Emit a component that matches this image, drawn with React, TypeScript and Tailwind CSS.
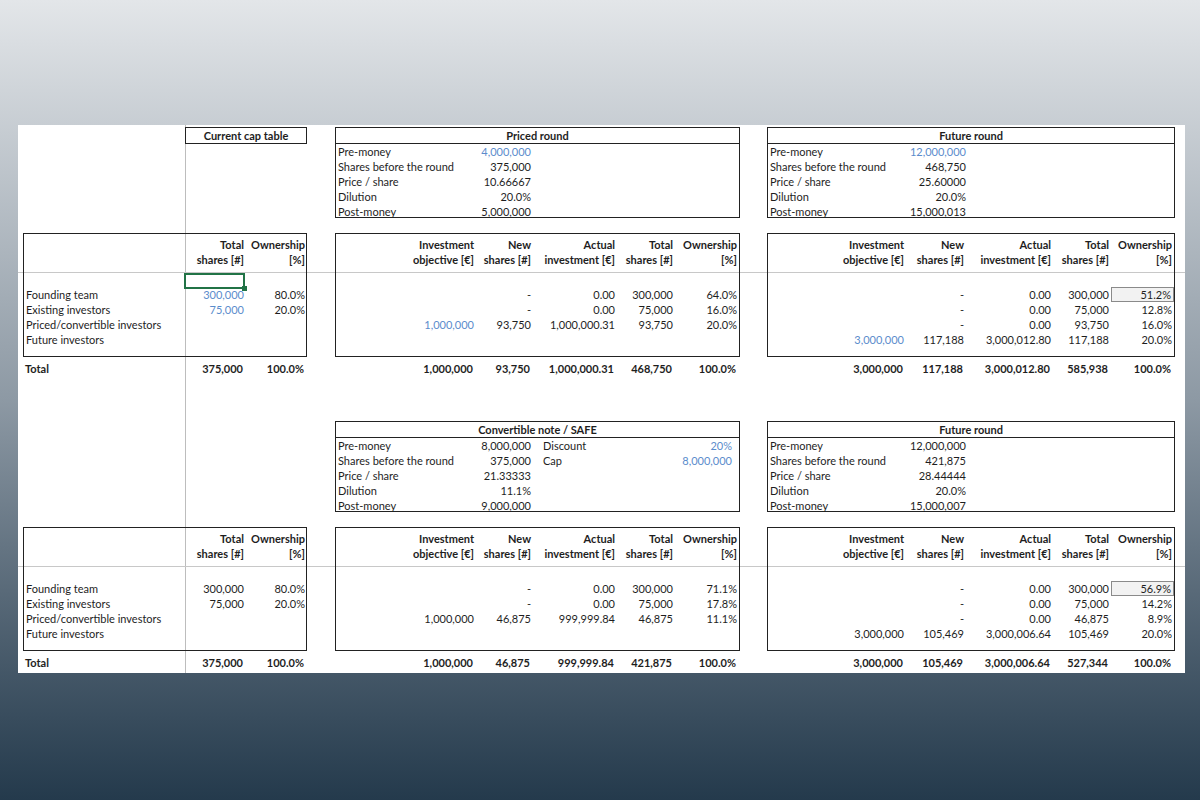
const FONT = { fontFamily: 'Lato, "Noto Sans", sans-serif' };

type Cell = { t?: string; blue?: boolean; hl?: boolean };

const MID_W = [140, 57, 84, 58, 64];
const RIGHT_W = [138, 60, 87, 58, 63];
const HEAD1 = ['Investment', 'New', 'Actual', 'Total', 'Ownership'];
const HEAD2 = ['objective [€]', 'shares [#]', 'investment [€]', 'shares [#]', '[%]'];
const LABELS = ['Founding team', 'Existing investors', 'Priced/convertible investors', 'Future investors'];

function NumRow({ widths, cells, bold }: { widths: number[]; cells: Cell[]; bold?: boolean }) {
  return (
    <div className={`flex h-[15px] leading-[15px] ${bold ? 'font-bold' : ''}`}>
      {widths.map((w, i) => {
        const c = cells[i] || {};
        return (
          <div
            key={i}
            style={{ width: w }}
            className={`text-right pr-[2px] shrink-0 ${c.blue ? 'text-[#5b8ccc]' : ''} ${c.hl ? 'bg-[#f2f2f2] border border-[#8a8a8a] leading-[13px]' : ''}`}
          >
            {c.t}
          </div>
        );
      })}
    </div>
  );
}

function TopBox({ title, rows, w, valW, extra }: { title: string; rows: [string, string, boolean?][]; w: number; valW: number; extra?: [string, string][] }) {
  return (
    <div style={{ width: w }} className="border border-[#222] h-[91px] shrink-0">
      <div className="h-[16px] leading-[15px] text-center font-bold border-b border-[#222]">{title}</div>
      {rows.map(([l, v, b], i) => (
        <div key={i} className="flex h-[15px] leading-[15px]">
          <div className="w-[140px] pl-[2px] shrink-0">{l}</div>
          <div style={{ width: valW }} className={`text-right shrink-0 ${b ? 'text-[#5b8ccc]' : ''}`}>{v}</div>
          {extra && extra[i] && (
            <>
              <div className="w-[84px] pl-[12px] shrink-0">{extra[i][0]}</div>
              <div className="w-[119px] text-right pr-[2px] shrink-0 text-[#5b8ccc]">{extra[i][1]}</div>
            </>
          )}
        </div>
      ))}
    </div>
  );
}

function TableBox({ widths, data, total, width }: { widths: number[]; data: Cell[][]; total: Cell[]; width: number }) {
  return (
    <div style={{ width }} className="shrink-0">
      <div className="border border-[#222] h-[124px] pt-[3px]">
        <NumRow widths={widths} cells={HEAD1.map((t) => ({ t }))} bold />
        <NumRow widths={widths} cells={HEAD2.map((t) => ({ t }))} bold />
        <div className="h-[20px]" />
        {data.map((r, i) => (
          <NumRow key={i} widths={widths} cells={r} />
        ))}
      </div>
      <div className="mt-[4px]">
        <NumRow widths={widths} cells={total} bold />
      </div>
    </div>
  );
}

function LeftBox({ data, total, selected }: { data: Cell[][]; total: Cell[]; selected?: boolean }) {
  return (
    <div className="w-[284px] shrink-0">
      <div className="border border-[#222] h-[124px] pt-[3px] flex">
        <div className="w-[161px] shrink-0">
          <div className="h-[50px]" />
          {LABELS.map((l) => (
            <div key={l} className="h-[15px] leading-[15px] pl-[2px]">{l}</div>
          ))}
        </div>
        <div className="relative">
          <NumRow widths={[61, 61]} cells={[{ t: 'Total' }, { t: 'Ownership' }]} bold />
          <NumRow widths={[61, 61]} cells={[{ t: 'shares [#]' }, { t: '[%]' }]} bold />
          <div className="h-[20px]" />
          {data.map((r, i) => (
            <NumRow key={i} widths={[61, 61]} cells={r} />
          ))}
          {selected && (
            <div className="absolute left-[-1px] top-[36px] w-[61px] h-[16px] border-2 border-[#217346]">
              <div className="absolute right-[-4px] bottom-[-4px] w-[5px] h-[5px] bg-[#217346]" />
            </div>
          )}
        </div>
      </div>
      <div className="mt-[4px] flex font-bold h-[15px] leading-[15px]">
        <div className="w-[161px] pl-[2px]">Total</div>
        <NumRow widths={[61, 61]} cells={total} bold />
      </div>
    </div>
  );
}

function Section({ first }: { first?: boolean }) {
  const mid = first
    ? {
        title: 'Priced round',
        rows: [['Pre-money', '4,000,000', true], ['Shares before the round', '375,000'], ['Price / share', '10.66667'], ['Dilution', '20.0%'], ['Post-money', '5,000,000']] as [string, string, boolean?][],
        data: [
          [{}, { t: '-' }, { t: '0.00' }, { t: '300,000' }, { t: '64.0%' }],
          [{}, { t: '-' }, { t: '0.00' }, { t: '75,000' }, { t: '16.0%' }],
          [{ t: '1,000,000', blue: true }, { t: '93,750' }, { t: '1,000,000.31' }, { t: '93,750' }, { t: '20.0%' }],
          [],
        ] as Cell[][],
        total: ['1,000,000', '93,750', '1,000,000.31', '468,750', '100.0%'].map((t) => ({ t })),
      }
    : {
        title: 'Convertible note / SAFE',
        rows: [['Pre-money', '8,000,000'], ['Shares before the round', '375,000'], ['Price / share', '21.33333'], ['Dilution', '11.1%'], ['Post-money', '9,000,000']] as [string, string, boolean?][],
        data: [
          [{}, { t: '-' }, { t: '0.00' }, { t: '300,000' }, { t: '71.1%' }],
          [{}, { t: '-' }, { t: '0.00' }, { t: '75,000' }, { t: '17.8%' }],
          [{ t: '1,000,000' }, { t: '46,875' }, { t: '999,999.84' }, { t: '46,875' }, { t: '11.1%' }],
          [],
        ] as Cell[][],
        total: ['1,000,000', '46,875', '999,999.84', '421,875', '100.0%'].map((t) => ({ t })),
      };
  const right = first
    ? {
        rows: [['Pre-money', '12,000,000', true], ['Shares before the round', '468,750'], ['Price / share', '25.60000'], ['Dilution', '20.0%'], ['Post-money', '15,000,013']] as [string, string, boolean?][],
        data: [
          [{}, { t: '-' }, { t: '0.00' }, { t: '300,000' }, { t: '51.2%', hl: true }],
          [{}, { t: '-' }, { t: '0.00' }, { t: '75,000' }, { t: '12.8%' }],
          [{}, { t: '-' }, { t: '0.00' }, { t: '93,750' }, { t: '16.0%' }],
          [{ t: '3,000,000', blue: true }, { t: '117,188' }, { t: '3,000,012.80' }, { t: '117,188' }, { t: '20.0%' }],
        ] as Cell[][],
        total: ['3,000,000', '117,188', '3,000,012.80', '585,938', '100.0%'].map((t) => ({ t })),
      }
    : {
        rows: [['Pre-money', '12,000,000'], ['Shares before the round', '421,875'], ['Price / share', '28.44444'], ['Dilution', '20.0%'], ['Post-money', '15,000,007']] as [string, string, boolean?][],
        data: [
          [{}, { t: '-' }, { t: '0.00' }, { t: '300,000' }, { t: '56.9%', hl: true }],
          [{}, { t: '-' }, { t: '0.00' }, { t: '75,000' }, { t: '14.2%' }],
          [{}, { t: '-' }, { t: '0.00' }, { t: '46,875' }, { t: '8.9%' }],
          [{ t: '3,000,000' }, { t: '105,469' }, { t: '3,000,006.64' }, { t: '105,469' }, { t: '20.0%' }],
        ] as Cell[][],
        total: ['3,000,000', '105,469', '3,000,006.64', '527,344', '100.0%'].map((t) => ({ t })),
      };
  const leftData: Cell[][] = [
    [{ t: '300,000', blue: first }, { t: '80.0%' }],
    [{ t: '75,000', blue: first }, { t: '20.0%' }],
    [],
    [],
  ];
  return (
    <div className="pl-[5px]">
      <div className="flex h-[106px]">
        <div className="w-[284px] shrink-0 flex">
          <div className="w-[162px]" />
          {first && (
            <div className="w-[122px] h-[17px] leading-[15px] border border-[#222] text-center font-bold">Current cap table</div>
          )}
        </div>
        <div className="w-[28px] shrink-0" />
        <TopBox title={mid.title} rows={mid.rows} w={405} valW={55} extra={first ? undefined : [['Discount', '20%'], ['Cap', '8,000,000']]} />
        <div className="w-[27px] shrink-0" />
        <TopBox title="Future round" rows={right.rows} w={408} valW={58} />
      </div>
      <div className="flex">
        <LeftBox data={leftData} total={[{ t: '375,000' }, { t: '100.0%' }]} selected={first} />
        <div className="w-[28px] shrink-0" />
        <TableBox widths={MID_W} data={mid.data} total={mid.total} width={405} />
        <div className="w-[27px] shrink-0" />
        <TableBox widths={RIGHT_W} data={right.data} total={right.total} width={408} />
      </div>
    </div>
  );
}

export default function App() {
  return (
    <div className="w-[1200px] h-[800px] bg-gradient-to-b from-[#e3e6e9] via-[#8d99a4] to-[#243a4c] pt-[125px] text-[11px] text-[#1e1e1e]" style={FONT}>
      <div className="ml-[18px] w-[1167px] h-[548px] bg-white relative pt-[2px]">
        <div className="absolute left-[167px] top-0 bottom-0 w-px bg-[#bdbdbd]" />
        <div className="absolute left-0 right-0 top-[147px] h-px bg-[#c8c8c8]" />
        <div className="absolute left-0 right-0 top-[441px] h-px bg-[#c8c8c8]" />
        <div className="relative">
          <Section first />
          <div className="h-[45px]" />
          <Section />
        </div>
      </div>
    </div>
  );
}
